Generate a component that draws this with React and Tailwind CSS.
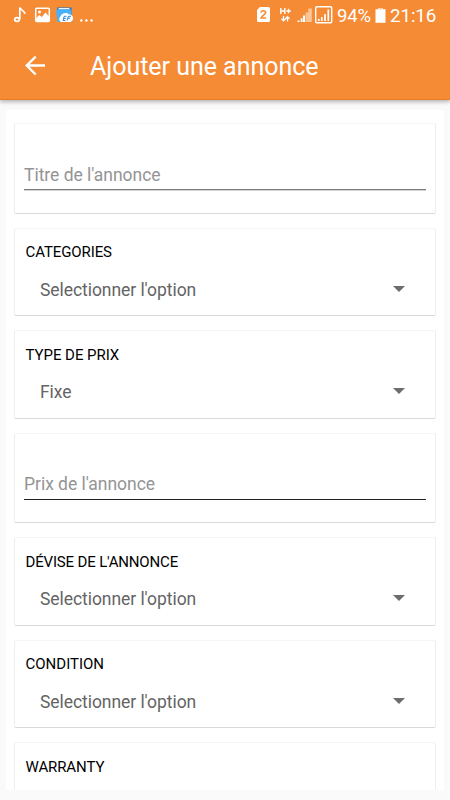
const base = "mx-2 shrink-0 rounded-[2px] border border-t-[#f4f4f4] border-x-[#eeeeee] bg-white";

function InputCard({ label, dark, className }) {
  return (
    <div className={`${base} border-b-[#d9d9d9] px-[9px] ${className}`}>
      <div className={`flex items-start text-[17.5px] leading-[22px] tracking-[-0.03px] text-[#949494] ${dark ? "h-[27px] border-b border-[#222222]" : "h-[26px] border-b border-[#7b7b7b] shadow-[0_1px_0_#d4d4d4]"}`}>
        {label}
      </div>
    </div>
  );
}

function SelectCard({ label, value, className, high, labelClass = "tracking-[-0.1px]" }) {
  return (
    <div className={`${base} border-b-[#d9d9d9] px-[10.5px] ${high ? "pt-[13px]" : "pt-[14px]"} ${className}`}>
      <div className={`h-5 text-[15px] leading-5 text-black ${labelClass}`}>{label}</div>
      {value && (
        <div className={`flex h-6 items-center justify-between pl-[14.5px] pr-[19.5px] text-[17.5px] leading-6 tracking-[-0.06px] text-[#646464] ${high ? "mt-[16px]" : "mt-[15px]"}`}>
          <span>{value}</span>
          <svg width="12" height="6" viewBox="0 0 12 6" className="relative -top-px shrink-0">
            <path d="M0 0h12L6 6z" fill="#6d6d6d" />
          </svg>
        </div>
      )}
    </div>
  );
}

function StatusBar() {
  return (
    <div className="flex h-8 items-center justify-between px-[13px] text-white">
      <svg width="82" height="20" viewBox="13 6 82 20">
        <ellipse cx="17" cy="19.5" rx="2.300" ry="1.900" fill="none" stroke="#fff" strokeWidth="1.700" />
        <path d="M19.800 19.500V7.500c.5 2.800 5 2.700 5 6.500" fill="none" stroke="#fff" strokeWidth="1.700" />
        <rect x="35.700" y="8.200" width="13.600" height="13.200" rx="1" fill="none" stroke="#fff" strokeWidth="1.500" />
        <circle cx="39.500" cy="12" r="1.500" fill="#fff" />
        <path d="M36 18.500l3-3.500 2.800 1.900 3.700-4.400 3.500 4V21H36z" fill="#fff" />
        <path d="M57 7.500h14.500V20H58z" fill="#1976d2" />
        <path d="M58.500 8h11v1.500h-11z" fill="#e9f6ff" />
        <path d="M56 9.500h15L72.500 22H57.500z" fill="#48b0fa" />
        <path d="M61 22a3.200 3.200 0 0 1-.8-5.200c1-3.800 6.300-5 8.500-2.600 3.500 0 5.300 3.300 4 5.800-.8 1.400-2 2-3.200 2z" fill="#fff" />
        <path d="M66.500 16.300h-2.300L63 20.500h2.300M63.800 18.400h2M71 16.300h-2.600l-1.400 4.200M68 18.200h2" fill="none" stroke="#2389dc" strokeWidth="1" />
        <circle cx="81.300" cy="20.500" r="1.200" fill="#fff" />
        <circle cx="86.400" cy="20.500" r="1.200" fill="#fff" />
        <circle cx="91.500" cy="20.500" r="1.200" fill="#fff" />
      </svg>
      <div className="flex items-center">
        <svg width="78" height="20" viewBox="256 6 78 20" className="mr-[3px]">
          <path d="M260 7h8.500q1.500 0 1.500 1.500v12q0 1.500-1.500 1.500h-10q-1.500 0-1.500-1.500V10z" fill="#fff" />
          <path d="M261 12.600q.2-1.900 2.400-1.900 2.300 0 2.300 1.800c0 1.900-4.200 3.600-4.600 5.500h5" fill="none" stroke="#f68b35" strokeWidth="1.600" />
          <path d="M280.800 8v6M284.800 8v6M281 11h4M286.300 11h4.500M288.500 8.800v4.500" fill="none" stroke="#fff" strokeWidth="1.400" />
          <path d="M283.500 16v5M281.500 18.800l2 2 2-2M287.500 21.500v-5M285.500 18.700l2-2 2 2" fill="none" stroke="#fff" strokeWidth="1.300" />
          <path d="M297.500 20.500h2V22h-2zM300.700 18.300h1.800V22h-1.800zM303 15.500h2V22h-2z" fill="#fff" />
          <path d="M305.500 12.500h2.800V22h-2.800zM308.300 8.500h3.500V22h-3.500z" fill="#fff" opacity=".5" />
          <rect x="315.700" y="6.700" width="16" height="16" rx="1" fill="none" stroke="#fff" strokeWidth="1.400" />
          <path d="M318.800 21v-2M321.800 21v-4M325 21v-7M328.300 21V9.500" stroke="#fff" strokeWidth="1.700" />
        </svg>
        <span className="w-[36px] whitespace-nowrap text-[18.500px] leading-5 tracking-[-0.200px]">94%</span>
        <svg width="11" height="16" viewBox="0 0 11 16" className="ml-[2px] mr-[4px]">
          <path d="M3 0h5v1H3z" fill="#fff" opacity=".6" />
          <path d="M.5 1.200h10V14.800H.5z" fill="#fff" />
        </svg>
        <span className="w-[47px] whitespace-nowrap text-[18.800px] leading-5 tracking-[-0.100px]">21:16</span>
      </div>
    </div>
  );
}

export default function App() {
  return (
    <div className="flex h-[800px] w-[450px] flex-col overflow-hidden bg-[#fafafa] font-['Roboto',sans-serif]">
      <header className="relative h-[100px] shrink-0 border-b border-[#e97d20] bg-[#f68b35] shadow-[0_2px_4px_rgba(0,0,0,0.28)]">
        <StatusBar />
        <div className="flex h-[67px] items-center pl-[25px] text-white">
          <svg width="20" height="20" viewBox="0 0 20 20">
            <path d="M20 9.500H2M10.700 .7L1.700 9.500l9 9" fill="none" stroke="#fff" strokeWidth="2.400" />
          </svg>
          <h1 className="ml-[45px] whitespace-nowrap pt-[2px] text-[25px] leading-8 tracking-[-0.03px]">Ajouter une annonce</h1>
        </div>
      </header>
      <main className="mx-[6px] mb-[10px] mt-[10px] flex min-h-0 flex-1 flex-col overflow-hidden bg-white pt-[13px]">
        <InputCard label="Titre de l'annonce" className="h-[91px] pt-[40px]" />
        <SelectCard label="CATEGORIES" value="Selectionner l'option" high className="mt-[14px] h-[88px]" />
        <SelectCard label="TYPE DE PRIX" value="Fixe" className="mt-[14px] h-[89px]" labelClass="tracking-[-0.04px]" />
        <InputCard label="Prix de l'annonce" dark className="mt-[14px] h-[90px] pt-[39px]" />
        <SelectCard label="DÉVISE DE L'ANNONCE" value="Selectionner l'option" className="mt-[14px] h-[89px]" labelClass="tracking-[-0.16px]" />
        <SelectCard label="CONDITION" value="Selectionner l'option" high className="mt-[14px] h-[88px]" labelClass="tracking-normal" />
        <SelectCard label="WARRANTY" className="mt-[14px] h-[89px]" />
      </main>
    </div>
  );
}
